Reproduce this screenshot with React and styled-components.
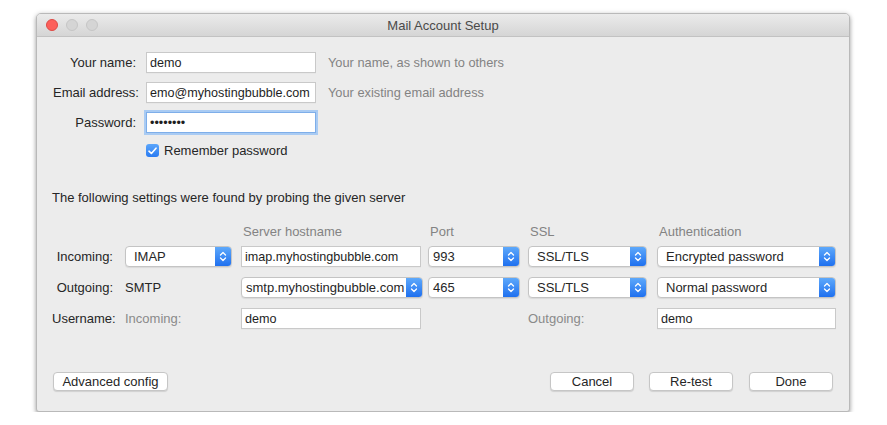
import React from "react";
import styled, { createGlobalStyle } from "styled-components";

const Global = createGlobalStyle`
  html, body { margin: 0; padding: 0; background: #fff; }
  body { font-family: "Liberation Sans", Helvetica, Arial, sans-serif; font-size: 13px; color: #262626; }
  * { box-sizing: border-box; }
`;

const Page = styled.div`
  padding: 13px 0 0 36px;
`;

const Window = styled.div`
  width: 814px;
  height: 399px;
  background: #ececec;
  border: 1px solid #b9b9b9;
  border-radius: 5px 5px 3px 3px;
  box-shadow: 0 2px 4px rgba(0, 0, 0, 0.35), 0 0 6px rgba(0, 0, 0, 0.08);
  display: flex;
  flex-direction: column;
  overflow: hidden;
`;

const TitleBar = styled.div`
  height: 23px;
  flex: none;
  background: linear-gradient(#ebebeb, #d5d5d5);
  border-bottom: 1px solid #c2c2c2;
  display: flex;
  align-items: center;
  position: relative;
  padding-left: 9px;
  gap: 8px;
`;

const Light = styled.span`
  width: 12px;
  height: 12px;
  border-radius: 50%;
  background: ${(p) => (p.$red ? "#fc605b" : "#d5d5d5")};
  border: 1px solid ${(p) => (p.$red ? "#de4a45" : "#c6c6c6")};
`;

const Title = styled.div`
  position: absolute;
  left: 0;
  right: 0;
  text-align: center;
  font-size: 13px;
  color: #4a4a4a;
  pointer-events: none;
`;

const Body = styled.div`
  flex: 1;
  display: flex;
  flex-direction: column;
  padding: 15px 14px 20px 15px;
`;

const TopForm = styled.div`
  display: grid;
  grid-template-columns: 83px 170px auto;
  column-gap: 10px;
  row-gap: 9px;
  align-items: center;
  padding-left: 1px;
`;

const Label = styled.div`
  white-space: nowrap;
  color: ${(p) => (p.$muted ? "#8a8a8a" : "#262626")};
  text-align: ${(p) => (p.$left ? "left" : "right")};
  padding-right: ${(p) => p.$pr || 0}px;
`;

const Hint = styled.div`
  color: #838383;
  padding-left: 2px;
  font-size: 12.8px;
`;

const Field = styled.input`
  width: ${(p) => p.$w || 170}px;
  height: 21px;
  border: 1px solid ${(p) => (p.$focus ? "#7eaee9" : "#c9c9c9")};
  box-shadow: ${(p) => (p.$focus ? "0 0 0 2px #a9cbf3" : "0 1px 0 rgba(0,0,0,0.02)")};
  background: #fff;
  font: inherit;
  font-size: 12.6px;
  color: #1e1e1e;
  padding: 0 3px;
  outline: none;
  margin: 0;
`;

const CheckRow = styled.div`
  grid-column: 2 / 4;
  display: flex;
  align-items: center;
  gap: 5px;
  margin-top: 1px;
`;

const Check = styled.span`
  width: 13px;
  height: 13px;
  border-radius: 3px;
  background: linear-gradient(#5ba6fb, #2a7bf2);
  display: flex;
  align-items: center;
  justify-content: center;
`;

const Notice = styled.div`
  margin-top: 32px;
`;

const Settings = styled.div`
  margin-top: 10px;
  display: grid;
  grid-template-columns: 73px 116px 187px 100px 129px 179px;
  grid-auto-rows: 21px;
  row-gap: 10px;
  align-items: center;
`;

const Head = styled.div`
  color: #838383;
  padding-left: 2px;
  align-self: end;
  margin-bottom: -3px;
`;

const Select = styled.div`
  width: ${(p) => p.$w}px;
  height: 21px;
  background: #fff;
  border: 1px solid #c4c4c4;
  border-radius: 4px;
  box-shadow: 0 1px 1px rgba(0, 0, 0, 0.08);
  display: flex;
  align-items: center;
  overflow: hidden;
`;

const SelectText = styled.span`
  flex: 1;
  padding-left: ${(p) => p.$pl || 8}px;
  white-space: nowrap;
  overflow: hidden;
`;

const Stepper = styled.span`
  width: 16px;
  height: 100%;
  flex: none;
  background: linear-gradient(#5ea9fb, #1f70ef);
  display: flex;
  align-items: center;
  justify-content: center;
`;

const Footer = styled.div`
  margin-top: auto;
  display: flex;
  align-items: center;
  padding-right: 2px;
`;

const Button = styled.button`
  width: ${(p) => p.$w}px;
  height: 19px;
  margin-left: ${(p) => p.$ml || 0}px;
  background: #fff;
  border: 1px solid #c6c6c6;
  border-radius: 4px;
  box-shadow: 0 1px 1px rgba(0, 0, 0, 0.12);
  font: inherit;
  font-size: 13px;
  color: #262626;
  padding: 0;
`;

const Spacer = styled.div`
  flex: 1;
`;

const Arrows = () => (
  <svg width="8" height="11" viewBox="0 0 8 11">
    <path d="M1.5 4 L4 1.5 L6.5 4 M1.5 7 L4 9.5 L6.5 7" fill="none" stroke="#fff" strokeWidth="1.3" strokeLinecap="round" strokeLinejoin="round" />
  </svg>
);

const Dropdown = ({ w, children, pl }) => (
  <Select $w={w}>
    <SelectText $pl={pl}>{children}</SelectText>
    <Stepper>
      <Arrows />
    </Stepper>
  </Select>
);

export default function App() {
  return (
    <Page>
      <Global />
      <Window>
        <TitleBar>
          <Light $red />
          <Light />
          <Light />
          <Title>Mail Account Setup</Title>
        </TitleBar>
        <Body>
          <TopForm>
            <Label>Your name:</Label>
            <Field readOnly value="demo" />
            <Hint>Your name, as shown to others</Hint>
            <Label>Email address:</Label>
            <Field readOnly value="emo@myhostingbubble.com" />
            <Hint>Your existing email address</Hint>
            <Label>Password:</Label>
            <Field readOnly type="password" value="demodemo" $focus />
            <div />
            <CheckRow>
              <Check>
                <svg width="9" height="8" viewBox="0 0 9 8">
                  <path d="M1 4.2 L3.4 6.5 L8 1.2" fill="none" stroke="#fff" strokeWidth="1.6" strokeLinecap="round" strokeLinejoin="round" />
                </svg>
              </Check>
              Remember password
            </CheckRow>
          </TopForm>

          <Notice>The following settings were found by probing the given server</Notice>

          <Settings>
            <div />
            <div />
            <Head>Server hostname</Head>
            <Head>Port</Head>
            <Head>SSL</Head>
            <Head>Authentication</Head>

            <Label $pr={12}>Incoming:</Label>
            <Dropdown w={107}>IMAP</Dropdown>
            <Field readOnly value="imap.myhostingbubble.com" $w={180} />
            <Dropdown w={92} pl={4}>993</Dropdown>
            <Dropdown w={119}>SSL/TLS</Dropdown>
            <Dropdown w={179}>Encrypted password</Dropdown>

            <Label $pr={12}>Outgoing:</Label>
            <Label $left>SMTP</Label>
            <Dropdown w={182} pl={4}>smtp.myhostingbubble.com</Dropdown>
            <Dropdown w={92} pl={4}>465</Dropdown>
            <Dropdown w={119}>SSL/TLS</Dropdown>
            <Dropdown w={179}>Normal password</Dropdown>

            <Label $pr={12}>Username:</Label>
            <Label $left $muted>Incoming:</Label>
            <Field readOnly value="demo" $w={180} />
            <div />
            <Label $left $muted>Outgoing:</Label>
            <Field readOnly value="demo" $w={179} />
          </Settings>

          <Footer>
            <Button $w={115} $ml={1}>Advanced config</Button>
            <Spacer />
            <Button $w={84}>Cancel</Button>
            <Button $w={84} $ml={15}>Re-test</Button>
            <Button $w={84} $ml={16}>Done</Button>
          </Footer>
        </Body>
      </Window>
    </Page>
  );
}
